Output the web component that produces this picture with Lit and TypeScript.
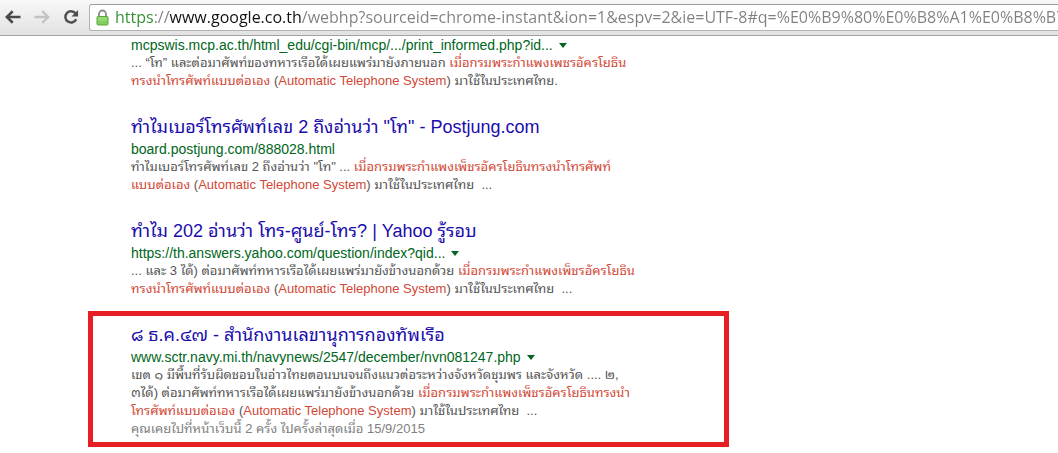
import { LitElement, html, css, nothing } from "lit";
import { customElement, property } from "lit/decorators.js";

interface Part {
  text: string;
  hit?: boolean;
}

interface Result {
  title?: string;
  url: string;
  menu: boolean;
  lines: Part[][];
  visited?: string;
  marked?: boolean;
}

const t = (text: string): Part => ({ text });
const h = (text: string): Part => ({ text, hit: true });

const RESULTS: Result[] = [
  {
    url: "mcpswis.mcp.ac.th/html_edu/cgi-bin/mcp/.../print_informed.php?id...",
    menu: true,
    lines: [
      [t("... “โท” และต่อมาศัพท์ของทหารเรือได้เผยแพร่มายังภายนอก "), h("เมื่อกรมพระกำแพงเพชรอัครโยธิน")],
      [h("ทรงนำโทรศัพท์แบบต่อเอง"), t(" ("), h("Automatic Telephone System"), t(") มาใช้ในประเทศไทย.")],
    ],
  },
  {
    title: 'ทำไมเบอร์โทรศัพท์เลข 2 ถึงอ่านว่า "โท" - Postjung.com',
    url: "board.postjung.com/888028.html",
    menu: false,
    lines: [
      [t('ทำไมเบอร์โทรศัพท์เลข 2 ถึงอ่านว่า "โท" ... '), h("เมื่อกรมพระกำแพงเพ็ชรอัครโยธินทรงนำโทรศัพท์")],
      [h("แบบต่อเอง"), t(" ("), h("Automatic Telephone System"), t(") มาใช้ในประเทศไทย\u00a0 ...")],
    ],
  },
  {
    title: "ทำไม 202 อ่านว่า โทร-ศูนย์-โทร? | Yahoo รู้รอบ",
    url: "https://th.answers.yahoo.com/question/index?qid...",
    menu: true,
    lines: [
      [t("... และ 3 ได้) ต่อมาศัพท์ทหารเรือได้เผยแพร่มายังข้างนอกด้วย "), h("เมื่อกรมพระกำแพงเพ็ชรอัครโยธิน")],
      [h("ทรงนำโทรศัพท์แบบต่อเอง"), t(" ("), h("Automatic Telephone System"), t(") มาใช้ในประเทศไทย\u00a0 ...")],
    ],
  },
  {
    title: "๘ ธ.ค.๔๗ - สำนักงานเลขานุการกองทัพเรือ",
    url: "www.sctr.navy.mi.th/navynews/2547/december/nvn081247.php",
    menu: true,
    marked: true,
    lines: [
      [t("เขต ๑ มีพื้นที่รับผิดชอบในอ่าวไทยตอนบนจนถึงแนวต่อระหว่างจังหวัดชุมพร และจังหวัด .... ๒,")],
      [t("๓ได้) ต่อมาศัพท์ทหารเรือได้เผยแพร่มายังข้างนอกด้วย "), h("เมื่อกรมพระกำแพงเพ็ชรอัครโยธินทรงนำ")],
      [h("โทรศัพท์แบบต่อเอง"), t(" ("), h("Automatic Telephone System"), t(") มาใช้ในประเทศไทย\u00a0 ...")],
    ],
    visited: "คุณเคยไปที่หน้าเว็บนี้ 2 ครั้ง ไปครั้งล่าสุดเมื่อ 15/9/2015",
  },
];

@customElement("browser-bar")
export class BrowserBar extends LitElement {
  static styles = css`
    :host {
      display: flex;
      align-items: center;
      box-sizing: border-box;
      height: 36px;
      padding: 0 0 1px 5px;
      background: linear-gradient(#f8f8f8, #e2e2e2);
      border-bottom: 1px solid #a3a3a3;
      overflow: hidden;
    }
    .nav {
      display: flex;
      flex: none;
      width: 29px;
      height: 28px;
      padding: 0;
      border: 0;
      background: none;
      align-items: center;
      justify-content: flex-start;
    }
    .nav svg {
      display: block;
    }
    .box {
      display: flex;
      flex: 1;
      align-items: center;
      min-width: 0;
      height: 25px;
      margin-left: -3px;
      padding-left: 6px;
      gap: 6px;
      background: #fff;
      border: 1px solid #b3b3b3;
      border-top-color: #9c9c9c;
      border-right: 0;
      border-radius: 3px 0 0 3px;
    }
    .lock {
      flex: none;
      display: block;
    }
    .address {
      flex: 1;
      min-width: 0;
      height: 24px;
      padding: 0;
      border: 0;
      outline: 0;
      font: 16px/24px "Open Sans", "Noto Sans", sans-serif;
      color: transparent;
      background: linear-gradient(
        to right,
        #2f8f2f 0 39px,
        #808080 39px 54px,
        #111 54px 187px,
        #808080 187px
      );
      -webkit-background-clip: text;
      background-clip: text;
    }
  `;

  render() {
    return html`
      <button class="nav" aria-label="Back">
        <svg width="16" height="16" viewBox="0 0 16 16" fill="none" stroke="#4a4a4a" stroke-width="2.6">
          <path d="M15.500 8H2.500M7.700 2.200L1.800 8l5.900 5.800" />
        </svg>
      </button>
      <button class="nav" aria-label="Forward" disabled>
        <svg width="16" height="16" viewBox="0 0 16 16" fill="none" stroke="#c3c3c3" stroke-width="2.4">
          <path d="M.5 8H13.500M8.300 2.200L14.200 8l-5.900 5.800" />
        </svg>
      </button>
      <button class="nav" aria-label="Reload">
        <svg width="16" height="16" viewBox="0 0 17 17">
          <path d="M13.2 4.600A6 6 0 1 0 14 10.800" fill="none" stroke="#4f4f4f" stroke-width="2.600" />
          <path d="M16 1v7H9z" fill="#4f4f4f" />
        </svg>
      </button>
      <div class="box">
        <svg class="lock" width="13" height="17" viewBox="0 0 13 17">
          <path d="M3 9V5a3.500 3.500 0 0 1 7 0v4" fill="none" stroke="#8b8b8b" stroke-width="1.800" />
          <rect x="1" y="7.500" width="11" height="8.500" rx="1" fill="#83cf5c" stroke="#5da53c" />
          <path d="M2 9h9M2 11h9" stroke="#a9e28a" />
        </svg>
        <input
          class="address"
          aria-label="Address"
          spellcheck="false"
          value="https://www.google.co.th/webhp?sourceid=chrome-instant&ion=1&espv=2&ie=UTF-8#q=%E0%B9%80%E0%B8%A1%E0%B8%B7%E0%B9%88%E0%B8%AD"
        />
      </div>
    `;
  }
}

@customElement("search-result")
export class SearchResult extends LitElement {
  @property({ attribute: false }) result!: Result;

  static styles = css`
    :host {
      display: block;
    }
    .card {
      padding: 7px 0 4px 38px;
      border: 5px solid transparent;
      white-space: nowrap;
      font-family: "Liberation Sans", "Noto Sans Thai Looped", "Loma", sans-serif;
    }
    .cut {
      padding-top: 0;
      border-top: 0;
    }
    .marked {
      border-color: #e81e25;
    }
    .title {
      margin: 0;
      height: 25px;
      font-size: 18px;
      line-height: 24px;
      font-weight: 400;
    }
    .title a {
      color: #1a0dab;
      text-decoration: none;
    }
    .source {
      display: flex;
      align-items: center;
      gap: 6px;
      height: 18px;
      font-size: 14px;
      line-height: 18px;
      color: #006621;
    }
    .menu {
      display: flex;
      padding: 0;
      border: 0;
      background: none;
    }
    .line {
      height: 18px;
      font-size: 13px;
      line-height: 18px;
      color: #545454;
    }
    .hit {
      color: #d14836;
    }
    .visited {
      color: #808080;
    }
  `;

  render() {
    const r = this.result;
    return html`
      <article class="card ${r.marked ? "marked" : ""} ${r.title ? "" : "cut"}">
        ${r.title ? html`<h3 class="title"><a href="#">${r.title}</a></h3>` : nothing}
        <div class="source">
          <span>${r.url}</span>
          ${r.menu
            ? html`<button class="menu" aria-label="More options">
                <svg width="8" height="5" viewBox="0 0 8 5"><path d="M0 0h8L4 5z" fill="#006621" /></svg>
              </button>`
            : nothing}
        </div>
        ${r.lines.map(
          (line) =>
            html`<div class="line">${line.map((p) => (p.hit ? html`<span class="hit">${p.text}</span>` : p.text))}</div>`
        )}
        ${r.visited ? html`<div class="line visited">${r.visited}</div>` : nothing}
      </article>
    `;
  }
}

@customElement("app-root")
export class AppRoot extends LitElement {
  static styles = css`
    :host {
      display: block;
      background: #fff;
      overflow: hidden;
    }
    .results {
      display: flex;
      flex-direction: column;
      gap: 4px;
      max-width: 641px;
      margin-left: 88px;
      padding-bottom: 6px;
    }
  `;

  render() {
    return html`
      <browser-bar></browser-bar>
      <main class="results">${RESULTS.map((r) => html`<search-result .result=${r}></search-result>`)}</main>
    `;
  }
}
